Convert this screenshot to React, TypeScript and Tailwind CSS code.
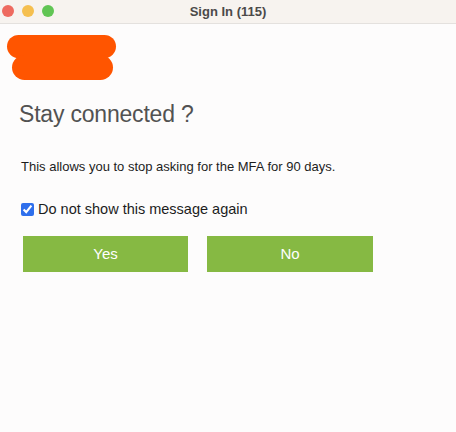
import { useState } from 'react';

function TrafficLights() {
  return (
    <div className="absolute left-[2px] top-[5px] flex gap-[8px]">
      <span className="h-[12px] w-[12px] rounded-full bg-[#ee6a5f]" />
      <span className="h-[12px] w-[12px] rounded-full bg-[#f5bf4f]" />
      <span className="h-[12px] w-[12px] rounded-full bg-[#61c554]" />
    </div>
  );
}

export default function App() {
  const [remember, setRemember] = useState(true);

  return (
    <div
      className="flex h-[432px] w-[456px] flex-col bg-[#fdfcfc]"
      style={{ fontFamily: '"Liberation Sans", Arial, sans-serif' }}
    >
      <div className="relative flex h-[24px] shrink-0 items-center justify-center border-b border-[#e4e1de] bg-[#f7f3ef]">
        <TrafficLights />
        <span className="text-[13px] font-bold text-[#4b4a49]">Sign In (115)</span>
      </div>

      <div className="flex flex-col pt-[11px]">
        {/* redacted logo */}
        <div className="flex flex-col">
          <div className="ml-[7px] h-[23px] w-[109px] rounded-full bg-[#ff5500]" />
          <div className="-mt-[3px] ml-[12px] h-[25px] w-[101px] rounded-full bg-[#ff5500]" />
        </div>

        <h1 className="ml-[19px] mt-[19px] text-[23px] font-light leading-[30px] tracking-[-0.2px] text-[#525252]">
          Stay connected ?
        </h1>

        <p className="ml-[21px] mt-[30px] text-[13px] leading-[16px] text-[#1c1c1c]">
          This allows you to stop asking for the MFA for 90 days.
        </p>

        <label className="ml-[21px] mt-[25px] flex items-center gap-[4px] text-[14.5px] leading-[18px] text-[#1c1c1c]">
          <input
            type="checkbox"
            checked={remember}
            onChange={(e) => setRemember(e.target.checked)}
            className="h-[13px] w-[13px] accent-[#2f6fec]"
          />
          Do not show this message again
        </label>

        <div className="ml-[23px] mt-[18px] flex gap-[19px]">
          <button className="h-[36px] w-[165px] bg-[#86b943] text-[15px] text-white">Yes</button>
          <button className="h-[36px] w-[166px] bg-[#86b943] text-[15px] text-white">No</button>
        </div>
      </div>
    </div>
  );
}
